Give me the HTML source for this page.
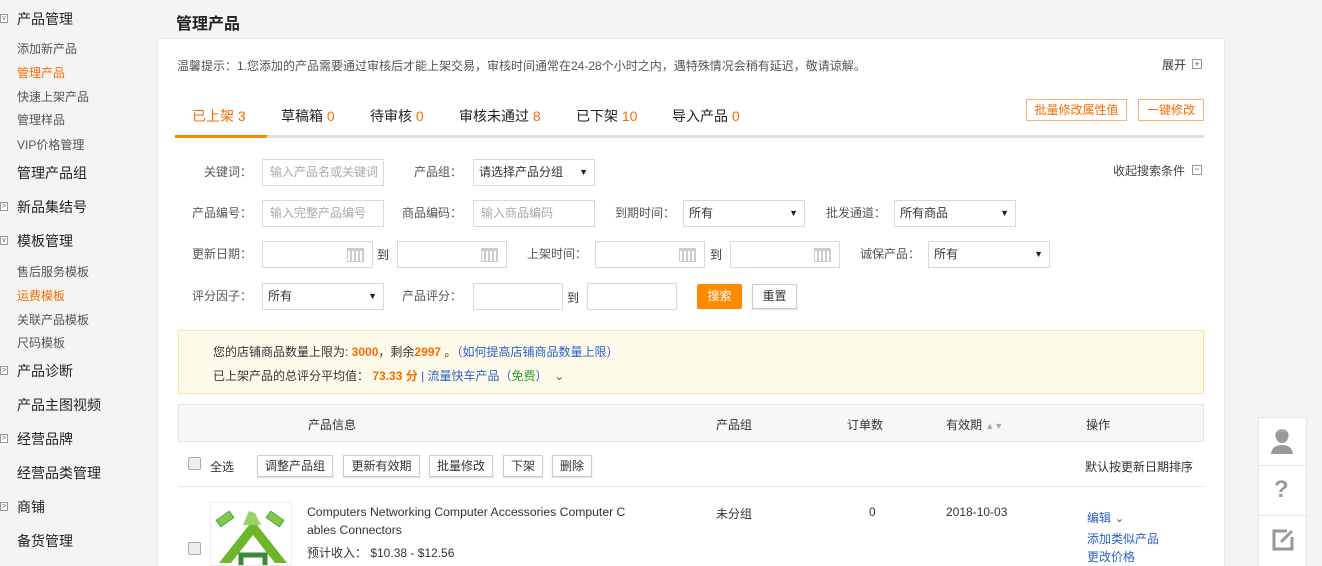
<!DOCTYPE html>
<html><head><meta charset="utf-8"><style>
*{margin:0;padding:0;box-sizing:border-box}
html{width:1322px;height:566px;overflow:hidden}
body{width:1322px;height:566px;overflow:hidden;background:#f4f4f4;font-family:"Liberation Sans","Noto Sans CJK SC",sans-serif;font-size:12px;color:#333;position:relative}
.a{position:absolute;white-space:nowrap}
.m{font-size:14px;color:#222;left:17px}
.s{font-size:12px;color:#555;left:17px}
.o{color:#ff6a00}
.tg{position:absolute;left:0;width:8px;height:9px;border:1px solid #999;background:#fff;font-size:7px;line-height:7px;text-align:center;color:#555}
.in{position:absolute;height:27px;border:1px solid #d9d9d9;background:#fff;font-size:12px;color:#aaa;padding-left:7px;line-height:25px}
.sel{color:#333;padding-left:5px}
.sel:after{content:"▼";position:absolute;right:6px;top:0;font-size:9px;color:#222}
.lb{position:absolute;font-size:12px;color:#555;text-align:right;line-height:27px}
.cal{position:absolute;right:8px;top:6px;width:17px;height:14px;border:1px solid #ccc;border-top:3px solid #ccc;background:repeating-linear-gradient(90deg,#fff 0 2px,#ccc 2px 4px)}
.btn{position:absolute;height:22px;border:1px solid #ccc;background:#fff;font-size:12px;line-height:20px;text-align:center;color:#333;box-shadow:0 1px 1px #ddd}
.cb{position:absolute;width:13px;height:13px;border:1px solid #aaa;border-radius:2px;background:#eee}
.lk{color:#2b5fc7}
</style></head><body>
<!-- sidebar -->
<div class="tg" style="top:14px">v</div><div class="a m" style="top:9px">产品管理</div>
<div class="a s" style="top:40px">添加新产品</div>
<div class="a s o" style="top:64px">管理产品</div>
<div class="a s" style="top:88px">快速上架产品</div>
<div class="a s" style="top:111px">管理样品</div>
<div class="a s" style="top:136px">VIP价格管理</div>
<div class="a m" style="top:163px">管理产品组</div>
<div class="tg" style="top:202px">&gt;</div><div class="a m" style="top:197px">新品集结号</div>
<div class="tg" style="top:236px">v</div><div class="a m" style="top:231px">模板管理</div>
<div class="a s" style="top:263px">售后服务模板</div>
<div class="a s o" style="top:287px">运费模板</div>
<div class="a s" style="top:311px">关联产品模板</div>
<div class="a s" style="top:334px">尺码模板</div>
<div class="tg" style="top:366px">&gt;</div><div class="a m" style="top:361px">产品诊断</div>
<div class="a m" style="top:395px">产品主图视频</div>
<div class="tg" style="top:434px">&gt;</div><div class="a m" style="top:429px">经营品牌</div>
<div class="a m" style="top:463px">经营品类管理</div>
<div class="tg" style="top:502px">&gt;</div><div class="a m" style="top:497px">商铺</div>
<div class="a m" style="top:531px">备货管理</div>

<div class="a" style="left:176px;top:10px;font-size:16px;font-weight:bold;color:#222">管理产品</div>
<div class="a" style="left:157px;top:38px;width:1068px;height:540px;background:#fff;border:1px solid #e8e8e8;border-bottom:none"></div>

<div class="a" style="left:177px;top:57px;color:#555">温馨提示：1.您添加的产品需要通过审核后才能上架交易，审核时间通常在24-28个小时之内，遇特殊情况会稍有延迟，敬请谅解。</div>
<div class="a" style="left:1162px;top:56px;color:#333">展开</div><div class="a" style="left:1192px;top:59px;width:10px;height:10px;border:1px solid #999;font-size:9px;line-height:8px;text-align:center;color:#555">+</div>

<!-- tabs -->
<div class="a" style="left:177px;top:135px;width:1027px;height:3px;background:#e0e0e0"></div>
<div class="a" style="left:175px;top:135px;width:92px;height:3px;background:#ff8a00"></div>
<div class="a" style="left:192px;top:106px;font-size:14px;color:#ff6a00">已上架 3</div>
<div class="a" style="left:281px;top:106px;font-size:14px;color:#222">草稿箱 <span class="o">0</span></div>
<div class="a" style="left:370px;top:106px;font-size:14px;color:#222">待审核 <span class="o">0</span></div>
<div class="a" style="left:459px;top:106px;font-size:14px;color:#222">审核未通过 <span class="o">8</span></div>
<div class="a" style="left:576px;top:106px;font-size:14px;color:#222">已下架 <span class="o">10</span></div>
<div class="a" style="left:672px;top:106px;font-size:14px;color:#222">导入产品 <span class="o">0</span></div>
<div class="btn" style="left:1026px;top:99px;width:101px;border-color:#ffb070;color:#ff6a00;box-shadow:none">批量修改属性值</div>
<div class="btn" style="left:1138px;top:99px;width:66px;border-color:#ffb070;color:#ff6a00;box-shadow:none">一键修改</div>

<div class="a" style="left:1113px;top:162px;color:#444">收起搜索条件</div><div class="a" style="left:1192px;top:165px;width:10px;height:10px;border:1px solid #999;font-size:9px;line-height:7px;text-align:center;color:#555">−</div>

<!-- search form -->
<div class="lb" style="left:190px;top:159px;width:62px">关键词：</div>
<div class="in" style="left:262px;top:159px;width:122px">输入产品名或关键词</div>
<div class="lb" style="left:400px;top:159px;width:62px">产品组：</div>
<div class="in sel" style="left:473px;top:159px;width:122px">请选择产品分组</div>

<div class="lb" style="left:180px;top:200px;width:72px">产品编号：</div>
<div class="in" style="left:262px;top:200px;width:122px">输入完整产品编号</div>
<div class="lb" style="left:390px;top:200px;width:72px">商品编码：</div>
<div class="in" style="left:473px;top:200px;width:122px">输入商品编码</div>
<div class="lb" style="left:603px;top:200px;width:72px">到期时间：</div>
<div class="in sel" style="left:683px;top:200px;width:122px">所有</div>
<div class="lb" style="left:814px;top:200px;width:72px">批发通道：</div>
<div class="in sel" style="left:894px;top:200px;width:122px">所有商品</div>

<div class="lb" style="left:180px;top:241px;width:72px">更新日期：</div>
<div class="in" style="left:262px;top:241px;width:111px"><div class="cal"></div></div>
<div class="a" style="left:377px;top:246px">到</div>
<div class="in" style="left:397px;top:241px;width:110px"><div class="cal"></div></div>
<div class="lb" style="left:515px;top:241px;width:72px">上架时间：</div>
<div class="in" style="left:595px;top:241px;width:110px"><div class="cal"></div></div>
<div class="a" style="left:710px;top:246px">到</div>
<div class="in" style="left:730px;top:241px;width:110px"><div class="cal"></div></div>
<div class="lb" style="left:848px;top:241px;width:72px">诚保产品：</div>
<div class="in sel" style="left:928px;top:241px;width:122px">所有</div>

<div class="lb" style="left:180px;top:283px;width:72px">评分因子：</div>
<div class="in sel" style="left:262px;top:283px;width:122px">所有</div>
<div class="lb" style="left:390px;top:283px;width:72px">产品评分：</div>
<div class="in" style="left:473px;top:283px;width:90px"></div>
<div class="a" style="left:567px;top:289px">到</div>
<div class="in" style="left:587px;top:283px;width:90px"></div>
<div class="a" style="left:697px;top:284px;width:45px;height:25px;background:#ff8a00;border-radius:2px;color:#fff;text-align:center;line-height:25px">搜索</div>
<div class="btn" style="left:752px;top:284px;width:45px;height:25px;line-height:23px">重置</div>

<!-- notice -->
<div class="a" style="left:178px;top:330px;width:1026px;height:64px;background:#fffbeb;border:1px solid #ffe29a"></div>
<div class="a" style="left:213px;top:343px;color:#333">您的店铺商品数量上限为: <b class="o">3000</b>，剩余<b class="o">2997</b> 。<span class="lk">（如何提高店铺商品数量上限）</span></div>
<div class="a" style="left:213px;top:367px;color:#333">已上架产品的总评分平均值： <b class="o">73.33 分</b> <span class="lk">| 流量快车产品（<span style="color:#2a9d2a">免费</span>）</span> &nbsp;<span style="color:#666">⌄</span></div>

<!-- table -->
<div class="a" style="left:178px;top:404px;width:1026px;height:38px;background:#f7f7f7;border:1px solid #e5e5e5"></div>
<div class="a" style="left:308px;top:416px">产品信息</div>
<div class="a" style="left:716px;top:416px">产品组</div>
<div class="a" style="left:847px;top:416px">订单数</div>
<div class="a" style="left:946px;top:416px">有效期 <span style="color:#aaa;font-size:9px">▲▼</span></div>
<div class="a" style="left:1086px;top:416px">操作</div>

<div class="cb" style="left:188px;top:457px"></div>
<div class="a" style="left:210px;top:458px">全选</div>
<div class="btn" style="left:257px;top:455px;width:76px">调整产品组</div>
<div class="btn" style="left:343px;top:455px;width:77px">更新有效期</div>
<div class="btn" style="left:429px;top:455px;width:64px">批量修改</div>
<div class="btn" style="left:503px;top:455px;width:40px">下架</div>
<div class="btn" style="left:552px;top:455px;width:40px">删除</div>
<div class="a" style="left:1085px;top:458px">默认按更新日期排序</div>
<div class="a" style="left:178px;top:486px;width:1026px;height:1px;background:#e5e5e5"></div>

<div class="cb" style="left:188px;top:542px"></div>
<div class="a" style="left:210px;top:502px;width:82px;height:64px;border:1px solid #eee;overflow:hidden;background:#fff">
<svg width="82" height="64" viewBox="0 0 82 64"><path d="M8 60 L38 22 L46 22 L76 60 L64 60 L42 32 L20 60Z" fill="#6fb52c"/><path d="M32 22 L38 8 L44 10 L50 22Z" fill="#9bd165"/><rect x="6" y="12" width="16" height="8" transform="rotate(-35 14 16)" fill="#8cc63f" stroke="#3a6" /><rect x="56" y="12" width="16" height="8" transform="rotate(35 64 16)" fill="#8cc63f" stroke="#3a6"/><path d="M30 64 L30 52 L54 52 L54 64" fill="none" stroke="#3a8a3a" stroke-width="5"/></svg></div>
<div class="a" style="left:307px;top:503px;color:#333;line-height:18px;font-size:12.2px">Computers Networking Computer Accessories Computer C<br>ables Connectors</div>
<div class="a" style="left:307px;top:544px;color:#333">预计收入： $10.38 - $12.56</div>
<div class="a" style="left:716px;top:505px">未分组</div>
<div class="a" style="left:869px;top:505px">0</div>
<div class="a" style="left:946px;top:505px">2018-10-03</div>
<div class="a lk" style="left:1087px;top:509px">编辑 <span style="color:#666">⌄</span></div>
<div class="a lk" style="left:1087px;top:530px">添加类似产品</div>
<div class="a lk" style="left:1087px;top:548px">更改价格</div>

<!-- right float -->
<div class="a" style="left:1258px;top:417px;width:49px;height:160px;background:#fff;border:1px solid #e5e5e5"></div>
<div class="a" style="left:1259px;top:465px;width:47px;height:1px;background:#e5e5e5"></div>
<div class="a" style="left:1259px;top:515px;width:47px;height:1px;background:#e5e5e5"></div>
<svg class="a" style="left:1270px;top:428px" width="24" height="26" viewBox="0 0 24 26"><circle cx="12" cy="9" r="6" fill="#999"/><path d="M1 26 Q2 17 12 17 Q22 17 23 26Z" fill="#999"/><path d="M6 9 Q6 2 12 2 Q18 2 18 9" fill="none" stroke="#999" stroke-width="1.5"/></svg>
<div class="a" style="left:1274px;top:476px;font-size:24px;font-weight:bold;color:#999">?</div>
<svg class="a" style="left:1271px;top:528px" width="24" height="24" viewBox="0 0 24 24"><path d="M16 3 H3 V21 H21 V9" fill="none" stroke="#999" stroke-width="3"/><path d="M10 14 L21 3" stroke="#999" stroke-width="3"/></svg>
</body></html>
